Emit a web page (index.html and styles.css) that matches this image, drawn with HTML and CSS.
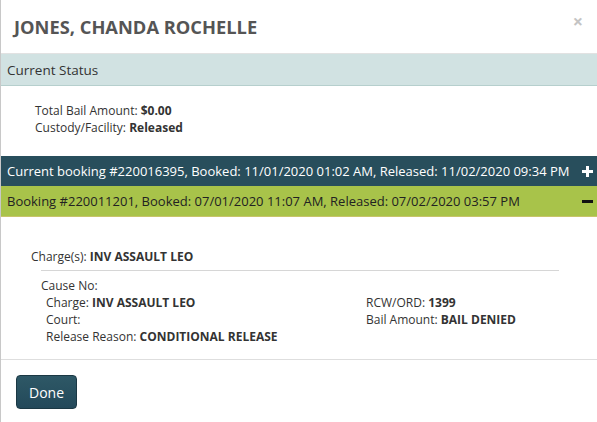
FILE: index.html
```html
<!DOCTYPE html>
<html>
<head>
<meta charset="utf-8">
<link rel="stylesheet" href="styles.css">
</head>
<body>
<div class="modal">
  <div class="modal-header">
    <h1 class="title">JONES, CHANDA ROCHELLE</h1>
    <span class="close">&times;</span>
  </div>
  <div class="band band-status">Current Status</div>
  <div class="status">
    <div>Total Bail Amount: <b>$0.00</b></div>
    <div>Custody/Facility: <b>Released</b></div>
  </div>
  <div class="band band-dark">
    <span>Current booking #220016395, Booked: 11/01/2020 01:02 AM, Released: 11/02/2020 09:34 PM</span>
    <svg class="icon" width="11" height="11" viewBox="0 0 11 11"><rect x="0" y="4" width="11" height="3" fill="#fff"/><rect x="4" y="0" width="3" height="11" fill="#fff"/></svg>
  </div>
  <div class="band band-green">
    <span>Booking #220011201, Booked: 07/01/2020 11:07 AM, Released: 07/02/2020 03:57 PM</span>
    <svg class="icon" width="11" height="11" viewBox="0 0 11 11"><rect x="0" y="4" width="11" height="3" fill="#111"/></svg>
  </div>
  <div class="booking-body">
    <div class="charges">Charge(s): <b>INV ASSAULT LEO</b></div>
    <div class="charge-detail">
      <div class="cause">Cause No:</div>
      <div class="cols">
        <div class="col-left">
          <div>Charge: <b>INV ASSAULT LEO</b></div>
          <div>Court:</div>
          <div>Release Reason: <b>CONDITIONAL RELEASE</b></div>
        </div>
        <div class="col-right">
          <div>RCW/ORD: <b>1399</b></div>
          <div>Bail Amount: <b>BAIL DENIED</b></div>
        </div>
      </div>
    </div>
  </div>
  <div class="modal-footer">
    <button class="btn">Done</button>
  </div>
</div>
</body>
</html>
```
FILE: styles.css
```css
html, body {
  margin: 0;
  padding: 0;
  background: #fff;
}
body {
  font-family: "Open Sans", "DejaVu Sans", sans-serif;
  color: #333;
  font-size: 12px;
}
.modal {
  border-left: 1px solid #c8c8c8;
  min-height: 422px;
  box-sizing: border-box;
}
.modal-header {
  height: 54px;
  box-sizing: border-box;
  border-bottom: 1px solid #e2e2e2;
  display: flex;
  align-items: center;
  justify-content: space-between;
  padding: 0 14px 0 13px;
}
.title {
  margin: 0;
  font-size: 18.3px;
  font-weight: 700;
  color: #555;
  line-height: 1;
  padding-top: 1px;
}
.close {
  color: #c4c4c4;
  font-size: 18px;
  font-weight: 700;
  line-height: 1;
  margin-top: -12px;
}
.band {
  display: flex;
  align-items: center;
  justify-content: space-between;
  padding: 0 4px 0 6px;
  font-size: 13px;
  white-space: nowrap;
  box-sizing: border-box;
}
.band-status {
  height: 32px;
  background: #d1e2e2;
  border-bottom: 1px solid #b6cfcd;
  color: #333;
  font-size: 13.5px;
  padding-top: 1px;
}
.status {
  padding: 16px 0 0 34px;
  line-height: 17px;
  height: 70px;
  box-sizing: border-box;
}
.band-dark {
  height: 30px;
  background: #284e5c;
  color: #fff;
}
.band-green {
  height: 31px;
  background: #a8c34a;
  color: #222;
  border-bottom: 1px solid #c8c46a;
}
.icon {
  display: block;
  flex: none;
}
.booking-body {
  padding: 31px 38px 0 30px;
  height: 142px;
  box-sizing: border-box;
}
.charges {
  line-height: 17px;
  padding-bottom: 5px;
}
.charge-detail {
  margin-left: 10px;
  border-top: 1px solid #d6d6d6;
  padding-top: 6px;
  line-height: 17px;
}
.cols {
  display: flex;
  padding-left: 5px;
}
.col-left {
  width: 320px;
}
.modal-footer {
  border-top: 1px solid #dedede;
  padding: 15px 15px;
}
.btn {
  font-family: "Open Sans", "DejaVu Sans", sans-serif;
  font-size: 14px;
  color: #fff;
  background: linear-gradient(#2e5866, #23495a);
  border: 1px solid #1b3844;
  border-radius: 4px;
  width: 61px;
  height: 34px;
  padding: 0;
  cursor: pointer;
}
```
